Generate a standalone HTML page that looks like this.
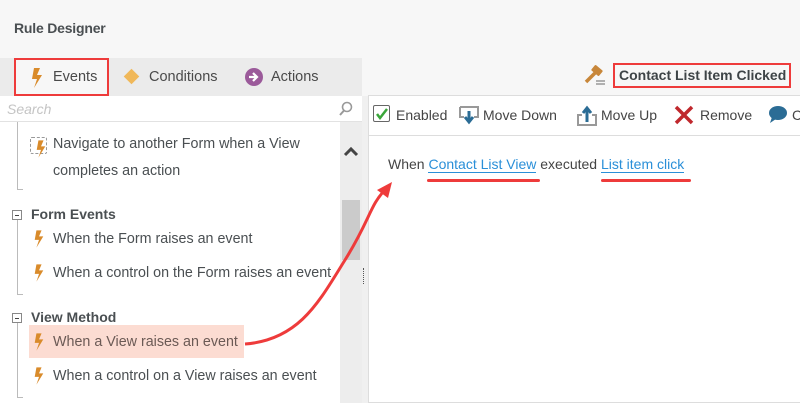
<!DOCTYPE html>
<html><head><meta charset="utf-8"><style>
*{margin:0;padding:0;box-sizing:border-box}
body{width:800px;height:403px;background:#f7f7f7;font-family:"Liberation Sans",sans-serif;color:#444;position:relative;overflow:hidden;font-size:14px}
.abs{position:absolute}
.title{left:14px;top:20px;font-size:14px;font-weight:bold;color:#4a4f52;letter-spacing:-0.2px}
.tabs{left:0;top:58px;width:362px;height:38px;background:#ebebeb}
.tab{position:absolute;top:11px;font-size:14.5px;color:#4a4a4a}
.redbox{border:2px solid #ee3b3b}
.list{left:0;top:122px;width:340px;height:281px;background:#fff}
.item{position:absolute;font-size:14.3px;color:#4a4f52}
.hdr{position:absolute;font-size:14px;font-weight:bold;color:#4a4f52}
.minus{position:absolute;width:10px;height:10px;border:1px solid #888;background:#fff}
.minus:after{content:"";position:absolute;left:2px;top:3.5px;width:4px;height:1px;background:#444}
.vline{position:absolute;width:1px;background:#bbb}
.link{color:#2a8fd8;border-bottom:1px solid #2a8fd8}
</style></head><body>
<div class="abs title">Rule Designer</div>
<div class="abs tabs"></div>
<div class="abs" style="left:14px;top:58px;width:94px;height:38px;background:#f7f7f7" ></div>
<div class="abs redbox" style="left:14px;top:58px;width:95px;height:38px"></div>
<svg class="abs" style="left:30px;top:68px" width="14" height="20" viewBox="0 0 14 20"><path d="M4 0h6l-3 7h5L4 20l3-9H2z" fill="#d98b2b"/></svg>
<div class="abs tab" style="left:53px;top:69px">Events</div>
<div class="abs" style="left:126px;top:71px;width:11px;height:11px;background:#f0b85a;transform:rotate(45deg)"></div>
<div class="abs tab" style="left:149px;top:69px">Conditions</div>
<svg class="abs" style="left:245px;top:68px" width="18" height="18"><circle cx="9" cy="9" r="9" fill="#9b5a9a"/><path d="M4 9h7M8 5l4 4-4 4" stroke="#fff" stroke-width="2.2" fill="none"/></svg>
<div class="abs tab" style="left:271px;top:69px">Actions</div>
<div class="abs" style="left:0;top:96px;width:362px;height:26px;background:#fff;border-bottom:1px solid #e2e2e2"></div>
<div class="abs" style="left:7px;top:101px;font-style:italic;color:#c4c4c4;font-size:14px">Search</div>
<svg class="abs" style="left:338px;top:101px" width="16" height="16"><circle cx="9" cy="6" r="4.5" stroke="#999" stroke-width="1.6" fill="none"/><path d="M6 9.5L2 14" stroke="#999" stroke-width="2"/></svg>
<div class="abs list"></div>
<div class="abs" style="left:340px;top:122px;width:22px;height:281px;background:#ededed"></div>
<svg class="abs" style="left:343px;top:145px" width="16" height="12"><path d="M2 10l6-6 6 6" stroke="#444" stroke-width="3" fill="none"/></svg>
<div class="abs" style="left:342px;top:200px;width:18px;height:60px;background:#cbcbcb"></div>
<div class="abs" style="left:362px;top:96px;width:6px;height:307px;background:#f0f0f0"></div>
<div class="abs" style="left:363px;top:268px;width:1px;height:16px;border-left:1px dotted #555"></div>
<div class="vline" style="left:17px;top:122px;height:68px"></div>
<div class="abs" style="left:17px;top:189px;width:6px;height:1px;background:#bbb"></div>
<div class="abs" style="left:30px;top:137px;width:17px;height:17px;border:1px dashed #999;border-radius:2px"></div>
<svg class="abs" style="left:35px;top:140px" width="12" height="18" viewBox="0 0 14 20"><path d="M4 0h6l-3 7h5L4 20l3-9H2z" fill="#d98b2b"/></svg>
<div class="item" style="left:53px;top:131px;line-height:27px">Navigate to another Form when a View<br>completes an action</div>
<div class="minus" style="left:12px;top:210px"></div>
<div class="hdr" style="left:31px;top:206px">Form Events</div>
<div class="vline" style="left:17px;top:220px;height:75px"></div>
<div class="abs" style="left:17px;top:294px;width:6px;height:1px;background:#bbb"></div>
<svg class="abs" style="left:33px;top:230px" width="12" height="18" viewBox="0 0 14 20"><path d="M4 0h6l-3 7h5L4 20l3-9H2z" fill="#d98b2b"/></svg>
<div class="item" style="left:53px;top:231px">When the Form raises an event</div>
<svg class="abs" style="left:33px;top:264px" width="12" height="18" viewBox="0 0 14 20"><path d="M4 0h6l-3 7h5L4 20l3-9H2z" fill="#d98b2b"/></svg>
<div class="item" style="left:53px;top:265px">When a control on the Form raises an event</div>
<div class="minus" style="left:12px;top:313px"></div>
<div class="hdr" style="left:31px;top:309px">View Method</div>
<div class="vline" style="left:17px;top:323px;height:75px"></div>
<div class="abs" style="left:17px;top:397px;width:6px;height:1px;background:#bbb"></div>
<div class="abs" style="left:29px;top:325px;width:215px;height:33px;background:#fcdcd2"></div>
<svg class="abs" style="left:33px;top:333px" width="12" height="18" viewBox="0 0 14 20"><path d="M4 0h6l-3 7h5L4 20l3-9H2z" fill="#d98b2b"/></svg>
<div class="item" style="left:53px;top:334px;color:#6b5a55">When a View raises an event</div>
<svg class="abs" style="left:33px;top:367px" width="12" height="18" viewBox="0 0 14 20"><path d="M4 0h6l-3 7h5L4 20l3-9H2z" fill="#d98b2b"/></svg>
<div class="item" style="left:53px;top:368px">When a control on a View raises an event</div>
<svg class="abs" style="left:584px;top:64px" width="22" height="22"><path d="M2 18l9-9" stroke="#c8873a" stroke-width="3.5"/><rect x="8" y="3" width="10" height="7" rx="1" transform="rotate(40 13 6.5)" fill="#c8873a"/><path d="M12 17h9M12 20h9" stroke="#999" stroke-width="1.5"/></svg>
<div class="abs redbox" style="left:613px;top:63px;width:178px;height:25px"></div>
<div class="abs" style="left:619px;top:67px;font-weight:bold;font-size:14px;color:#3e4447">Contact List Item Clicked</div>
<div class="abs" style="left:368px;top:95px;width:432px;height:308px;background:#fff;border:1px solid #ddd;border-right:none"></div>
<div class="abs" style="left:368px;top:135px;width:432px;height:1px;background:#ddd"></div>
<div class="abs" style="left:373px;top:105px;width:17px;height:17px;border:1.5px solid #666;border-radius:2px;background:#fff"></div>
<svg class="abs" style="left:375px;top:107px" width="14" height="14"><path d="M2 7l3 4 7-9" stroke="#3aa63a" stroke-width="2.5" fill="none"/></svg>
<div class="abs" style="left:396px;top:107px">Enabled</div>
<svg class="abs" style="left:458px;top:104px" width="22" height="22"><path d="M2 3h18v10h-4M6 13H2V3" stroke="#999" stroke-width="2" fill="none"/><path d="M11 7v10M7 13l4 5 4-5" stroke="#2b6c95" stroke-width="3" fill="none"/></svg>
<div class="abs" style="left:483px;top:107px">Move Down</div>
<svg class="abs" style="left:576px;top:104px" width="22" height="22"><path d="M6 11H2v10h18V11h-4" stroke="#999" stroke-width="2" fill="none"/><path d="M11 18V5M7 9l4-5 4 5" stroke="#2b6c95" stroke-width="3" fill="none"/></svg>
<div class="abs" style="left:601px;top:107px">Move Up</div>
<svg class="abs" style="left:673px;top:104px" width="22" height="22"><path d="M3 3l16 16M19 3L3 19" stroke="#c0282d" stroke-width="3.5"/></svg>
<div class="abs" style="left:700px;top:107px">Remove</div>
<svg class="abs" style="left:768px;top:105px" width="20" height="20"><ellipse cx="10" cy="8" rx="9" ry="7" fill="#2b6c95"/><path d="M4 12l-2 6 6-4z" fill="#2b6c95"/></svg>
<div class="abs" style="left:792px;top:107px">C</div>
<div class="abs" style="left:388px;top:156px">When <span class="link">Contact List View</span> executed <span class="link">List item click</span></div>
<div class="abs" style="left:427px;top:179px;width:113px;height:3px;background:#ee3b3b;border-radius:2px"></div>
<div class="abs" style="left:601px;top:179px;width:90px;height:3px;background:#ee3b3b;border-radius:2px"></div>
<svg class="abs" style="left:0;top:0" width="800" height="403"><path d="M245 344C300 340 320 300 345 260S370 205 385 190" stroke="#ee3b3b" stroke-width="3" fill="none"/><path d="M392 182L377 190L388 198Z" fill="#ee3b3b"/></svg>
</body></html>
